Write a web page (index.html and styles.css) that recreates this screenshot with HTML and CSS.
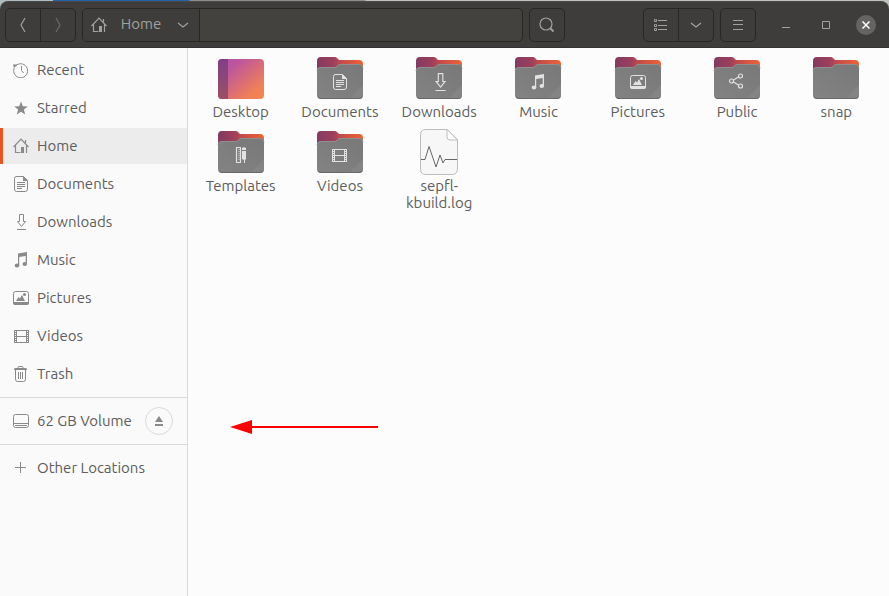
FILE: index.html
```html
<!DOCTYPE html>
<html lang="en">
<head>
<meta charset="utf-8">
<title>Home</title>
<link rel="stylesheet" href="styles.css">
</head>
<body>
<svg class="defs" aria-hidden="true">
  <defs>
    <linearGradient id="back" x1="0" y1="0" x2="1" y2="0"><stop offset="0" stop-color="#843a62"/><stop offset=".35" stop-color="#9c3f5c"/><stop offset=".55" stop-color="#c54d49"/><stop offset="1" stop-color="#ee6335"/></linearGradient>
    <linearGradient id="desk" x1="0" y1="0" x2="1" y2="1"><stop offset="0" stop-color="#b94fae"/><stop offset=".25" stop-color="#bd559e"/><stop offset=".8" stop-color="#f08057"/><stop offset="1" stop-color="#f6864f"/></linearGradient>
    <linearGradient id="desk-side" x1="0" y1="0" x2="0" y2="1"><stop offset="0" stop-color="#7f3f87"/><stop offset="1" stop-color="#9b5066"/></linearGradient>
    <linearGradient id="front" x1="1" y1="0" x2="0" y2="1"><stop offset="0" stop-color="#787878"/><stop offset="1" stop-color="#838383"/></linearGradient>
    <symbol id="folder" viewBox="0 0 48 48">
      <path d="M1 7q0-4 4-4h14q1 0 2 1l2 2h20q4 0 4 4v20H1z" fill="url(#back)"/>
      <path d="M1 17q0-4 4-4h14q1 0 2-1l1-1q1-1 2-1h19q4 0 4 4v27q0 4-4 4H5q-4 0-4-4z" fill="url(#front)"/>
      <path d="M1 17q0-3.500 4-3.500h14q1 0 2-1l1-1q1-1 2-1h19q4 0 4 4" fill="none" stroke="#8f8f8f"/>
      <path d="M47 31v10q0 4-4 4H33z" fill="#848484"/>
      <path d="M2 43q1 1.500 3 1.500h38q2 0 3-1.500" fill="none" stroke="#696969"/>
    </symbol>
    <symbol id="recent" viewBox="0 0 16 16"><path d="M3 3.500A7 7 0 1 1 1.200 6M8.500 4v4.500l2 2.500" class="line"/><path d="M0 2.500h5L1 6z" class="solid"/></symbol>
    <symbol id="star" viewBox="0 0 16 16"><path d="M8 1.500l1.800 4.700 5 .2-3.900 3.200 1.300 5L8 11.800l-4.200 2.800 1.300-5-3.900-3.200 5-.2z" class="solid"/></symbol>
    <symbol id="home" viewBox="0 0 16 16"><path d="M.5 9L8 1.200 15.500 9M2.500 7.500v7h5M13.500 15v-7.500M12.500 2v3" class="line bold"/><path d="M8 9h3v6H8z" class="solid"/></symbol>
    <symbol id="document" viewBox="0 0 16 16"><path d="M3 .5h7.500l4 4V13q0 2.500-2.500 2.500H3.500Q1.500 15.500 1.500 13V2.500q0-2 2-2zM4 6.500h8M4 8.500h8M4 10.500h8M4 12.500h5" class="line"/><path d="M10 0l5 5h-5z" class="solid"/></symbol>
    <symbol id="download" viewBox="0 0 16 16"><path d="M6.500.5h4v7h2l-4 5-4-5h2zM4 15.500h9" class="line"/></symbol>
    <symbol id="music" viewBox="0 0 16 16"><path d="M5 1.500L14 0v12h-1.300V4L6.200 5v8.500H5z" class="solid"/><ellipse cx="4" cy="13.500" rx="2.300" ry="2" class="solid"/><ellipse cx="11.800" cy="12" rx="2.300" ry="2" class="solid"/></symbol>
    <symbol id="picture" viewBox="0 0 16 16"><rect x=".5" y="1.500" width="15" height="13" rx="2" class="line"/><path d="M0 12h16v1q0 2-2 2H2q-2 0-2-2zM3 11l2.500-4 1.500 1.500L9 5l3 6z" class="solid"/><circle cx="11.500" cy="4.500" r="1.500" class="solid"/></symbol>
    <symbol id="video" viewBox="0 0 16 16"><path d="M3.500 2v13M13.500 2v13M3 2.500h11M3 8.500h11M3 14.500h11" class="line"/><path d="M1.500 2v13M15.500 2v13" class="line"/><path d="M2.500 2v13M14.500 2v13" class="line dash"/></symbol>
    <symbol id="trash" viewBox="0 0 16 16"><path d="M1 3.500h13M2.500 4v9.500q0 2 2 2h6q2 0 2-2V4M5.500 6v7M7.500 6v7M9.500 6v7M5 3V1.500q0-1 1-1h3q1 0 1 1V3" class="line"/><path d="M1 3q0-1 2-1h9q2 0 2 1v1H1z" class="solid"/></symbol>
    <symbol id="drive" viewBox="0 0 16 16"><path d="M2.500 1.500h11q2 0 2 2v9q0 2-2 2h-11q-2 0-2-2v-9q0-2 2-2zM1 10.500h14M2 12.500h12" class="line"/></symbol>
    <symbol id="plus" viewBox="0 0 16 16"><path d="M7.500 2v11M2 7.500h11" class="line"/></symbol>
    <symbol id="eject" viewBox="0 0 16 16"><path d="M8 3l4 6H4zM4 11h8v2H4z" class="solid"/></symbol>
    <symbol id="share" viewBox="0 0 16 16"><g class="line bold"><circle cx="3.500" cy="8" r="2"/><circle cx="12.500" cy="3" r="2"/><circle cx="12.500" cy="13" r="2"/><path d="M5.500 7l5-3M5.500 9l5 3"/></g></symbol>
    <symbol id="template" viewBox="0 0 16 16"><path d="M3.500 1v14M7.500 1v14M3 .5h5M3 15.500h5" class="line bold"/><path d="M6 2v12" class="line dash"/><path d="M9 1q2-1.500 4 0v2H9zM9 4h4v8l-1 1v3h-1v-3l-2-1z" class="solid"/></symbol>
    <symbol id="down" viewBox="0 0 16 16"><path d="M3 6l5 4 5-4" class="line bold"/></symbol>
  </defs>
</svg>
<div class="window">
  <header class="header">
    <div class="group">
      <button class="tool" aria-label="Back"><svg class="icon" viewBox="0 0 16 16"><path d="M10 1L6 8l4 7" class="line bold"/></svg></button>
      <button class="tool" aria-label="Forward" disabled><svg class="icon" viewBox="0 0 16 16"><path d="M6 1l4 7-4 7" class="line bold"/></svg></button>
    </div>
    <nav class="group path" aria-label="Location">
      <button class="crumb"><svg class="icon"><use href="#home"/></svg><span>Home</span><svg class="icon"><use href="#down"/></svg></button>
    </nav>
    <div class="group search"><button class="tool" aria-label="Search"><svg class="icon" viewBox="0 0 16 16"><path d="M11.500 11.500l3 3" class="line thick"/><circle cx="7" cy="7" r="6" class="line bold"/></svg></button></div>
    <div class="group">
      <button class="tool" aria-label="List view"><svg class="icon" viewBox="0 0 16 16"><path d="M5 3.500h9M5 8.500h9M5 12.500h9M2.500 2.500h1v2h-2v-2zM2.500 7.500h1v2h-2v-2zM2.500 11.500h1v2h-2v-2z" class="line"/></svg></button>
      <button class="tool" aria-label="View options"><svg class="icon"><use href="#down"/></svg></button>
    </div>
    <div class="group"><button class="tool" aria-label="Menu"><svg class="icon" viewBox="0 0 16 16"><path d="M3 3.500h10M3 7.500h10M3 12.500h10" class="line"/></svg></button></div>
    <div class="controls">
      <button aria-label="Minimize"><svg class="icon" viewBox="0 0 16 16"><path d="M4 10.500h8" class="line"/></svg></button>
      <button aria-label="Maximize"><svg class="icon" viewBox="0 0 16 16"><path d="M4.500 4.500h7v7h-7z" class="line"/></svg></button>
      <button aria-label="Close"><svg class="icon close" viewBox="0 0 20 20"><path d="M6.500 6.500l7 7M13.500 6.500l-7 7"/></svg></button>
    </div>
  </header>
  <div class="content">
    <aside class="sidebar">
      <a href="#" class="place"><svg class="icon"><use href="#recent"/></svg>Recent</a>
      <a href="#" class="place"><svg class="icon"><use href="#star"/></svg>Starred</a>
      <a href="#" class="place active" aria-current="page"><svg class="icon"><use href="#home"/></svg>Home</a>
      <a href="#" class="place"><svg class="icon"><use href="#document"/></svg>Documents</a>
      <a href="#" class="place"><svg class="icon"><use href="#download"/></svg>Downloads</a>
      <a href="#" class="place"><svg class="icon"><use href="#music"/></svg>Music</a>
      <a href="#" class="place"><svg class="icon"><use href="#picture"/></svg>Pictures</a>
      <a href="#" class="place"><svg class="icon"><use href="#video"/></svg>Videos</a>
      <a href="#" class="place"><svg class="icon"><use href="#trash"/></svg>Trash</a>
      <hr>
      <div class="volume">
        <a href="#" class="place"><svg class="icon"><use href="#drive"/></svg>62 GB Volume</a>
        <button class="eject" aria-label="Eject"><svg class="icon"><use href="#eject"/></svg></button>
      </div>
      <hr>
      <a href="#" class="place"><svg class="icon"><use href="#plus"/></svg>Other Locations</a>
    </aside>
    <main class="files">
      <a href="#" class="file"><svg class="thumb" viewBox="0 0 48 48"><rect x="1" y="5" width="46" height="40" rx="4" fill="url(#desk)"/><path d="M11 5v40H5q-4 0-4-4V9q0-4 4-4z" fill="url(#desk-side)"/></svg>Desktop</a>
      <a href="#" class="file"><svg class="thumb" viewBox="0 0 48 48"><use href="#folder"/><use href="#document" x="16" y="20" width="16" height="16"/></svg>Documents</a>
      <a href="#" class="file"><svg class="thumb" viewBox="0 0 48 48"><use href="#folder"/><use href="#download" x="16" y="19" width="18" height="18"/></svg>Downloads</a>
      <a href="#" class="file"><svg class="thumb" viewBox="0 0 48 48"><use href="#folder"/><use href="#music" x="16" y="20" width="16" height="16"/></svg>Music</a>
      <a href="#" class="file"><svg class="thumb" viewBox="0 0 48 48"><use href="#folder"/><use href="#picture" x="16" y="20" width="16" height="16"/></svg>Pictures</a>
      <a href="#" class="file"><svg class="thumb" viewBox="0 0 48 48"><use href="#folder"/><use href="#share" x="15" y="19" width="16" height="16"/></svg>Public</a>
      <a href="#" class="file"><svg class="thumb" viewBox="0 0 48 48"><use href="#folder"/></svg>snap</a>
      <a href="#" class="file"><svg class="thumb" viewBox="0 0 48 48"><use href="#folder"/><use href="#template" x="16" y="19" width="16" height="16"/></svg>Templates</a>
      <a href="#" class="file"><svg class="thumb" viewBox="0 0 48 48"><use href="#folder"/><use href="#video" x="15" y="19" width="16" height="16"/></svg>Videos</a>
      <a href="#" class="file"><svg class="thumb" viewBox="0 0 48 48"><path d="M11 1.500h21l10.500 10V40q0 6.500-5 6.500H11q-5.500 0-5.500-5.500V7q0-5.500 5.500-5.500z" fill="#f7f7f7" stroke="#bdbdbd"/><path d="M32 1.500V9q0 3 3 3h7.500z" fill="#fff" stroke="#bdbdbd"/><path d="M6 31.500h4l4-13 7 20.500 4-12 3 8 2-3.500h12" fill="none" stroke="#666"/></svg>sepfl-<br>kbuild.log</a>
      <svg class="arrow" viewBox="0 0 148 14" aria-hidden="true"><path d="M0 7L22 0v6h126v2H22v6z" fill="#f00"/></svg>
    </main>
  </div>
</div>
</body>
</html>
```
FILE: styles.css
```css
* { box-sizing: border-box; }
body {
  margin: 0;
  font: 15px/17px Ubuntu, "Noto Sans", sans-serif;
  color: #5d5d5d;
  background: linear-gradient(90deg, #aebcc0 53px, #2462ac 53px, #2462ac 189px, #8c8e8a 190px, #8c8e8a 365px, #c0c2be 366px) 0 0 / 100% 10px no-repeat, #fcfcfc;
}
.defs { position: absolute; width: 0; height: 0; }
a { color: inherit; text-decoration: none; }
button { padding: 0; border: 0; background: none; font: inherit; color: inherit; }
.window { display: flex; flex-direction: column; min-height: 100vh; padding-top: 1px; }
.header {
  display: flex;
  align-items: center;
  gap: 6px;
  height: 47px;
  padding: 0 3px 0 5px;
  background: #3e3d3b;
  border-top: 1px solid #4a4947;
  border-bottom: 1px solid #353134;
  border-radius: 8px 8px 0 0;
  color: #a2a19f;
}
.group { display: flex; height: 34px; border: 1px solid #282725; border-radius: 5px; }
.tool { display: grid; place-items: center; width: 34px; }
.tool + .tool { width: 35px; border-left: 1px solid #282725; }
.tool:disabled { color: #6b6a68; }
.path { flex: 1; background: #43423f; border-radius: 5px; }
.crumb {
  display: flex;
  align-items: center;
  width: 117px;
  padding: 0 8px;
  background: #3e3d3b;
  border-right: 1px solid #282725;
  border-radius: 4px 0 0 4px;
  line-height: 16px;
}
.crumb span { flex: 1; padding-bottom: 2px; }
.search { margin-right: 72px; }
.controls { display: flex; margin-left: 4px; }
.controls button { display: grid; place-items: center; width: 40px; height: 34px; }
.icon { display: block; flex: none; width: 16px; height: 16px; }
.icon.close { width: 20px; height: 20px; border-radius: 50%; background: #656463; fill: none; stroke: #fff; stroke-width: 1.500; }
.line { fill: none; stroke: currentColor; stroke-width: 1; }
.bold { stroke-width: 1.2; }
.thick { stroke-width: 2; }
.dash { stroke-dasharray: 1 1; }
.solid { fill: currentColor; }
.content { display: flex; flex: 1; }
.sidebar { flex: none; width: 188px; padding-top: 4px; background: #fafafa; border-right: 1px solid #dadada; }
.place { display: flex; align-items: center; gap: 8px; height: 36px; padding-left: 13px; margin-bottom: 2px; line-height: 16px; }
.place .icon { color: #8a8a8a; }
.place.active { background: #ececec; border-left: 3px solid #e95420; padding-left: 10px; }
.sidebar hr { height: 1px; margin: 5px 0; border: 0; background: #dadada; }
.place:has(+ hr), .volume .place { margin-bottom: 0; }
.volume { display: flex; align-items: center; justify-content: space-between; padding-right: 14px; }
.eject { display: grid; place-items: center; width: 28px; height: 28px; border: 1px solid #dadada; border-radius: 50%; color: #8a8a8a; }
.files {
  position: relative;
  flex: 1;
  display: grid;
  grid-template-columns: repeat(auto-fill, minmax(96px, 1fr));
  align-content: start;
  gap: 8px 0;
  padding: 6px 3px;
  background: #fcfcfc;
}
.file { display: block; text-align: center; }
.thumb { display: block; width: 48px; height: 48px; margin: 0 auto 1px; color: #e2e2e2; }
.arrow { position: absolute; left: 42px; top: 372px; width: 148px; height: 14px; }
```
